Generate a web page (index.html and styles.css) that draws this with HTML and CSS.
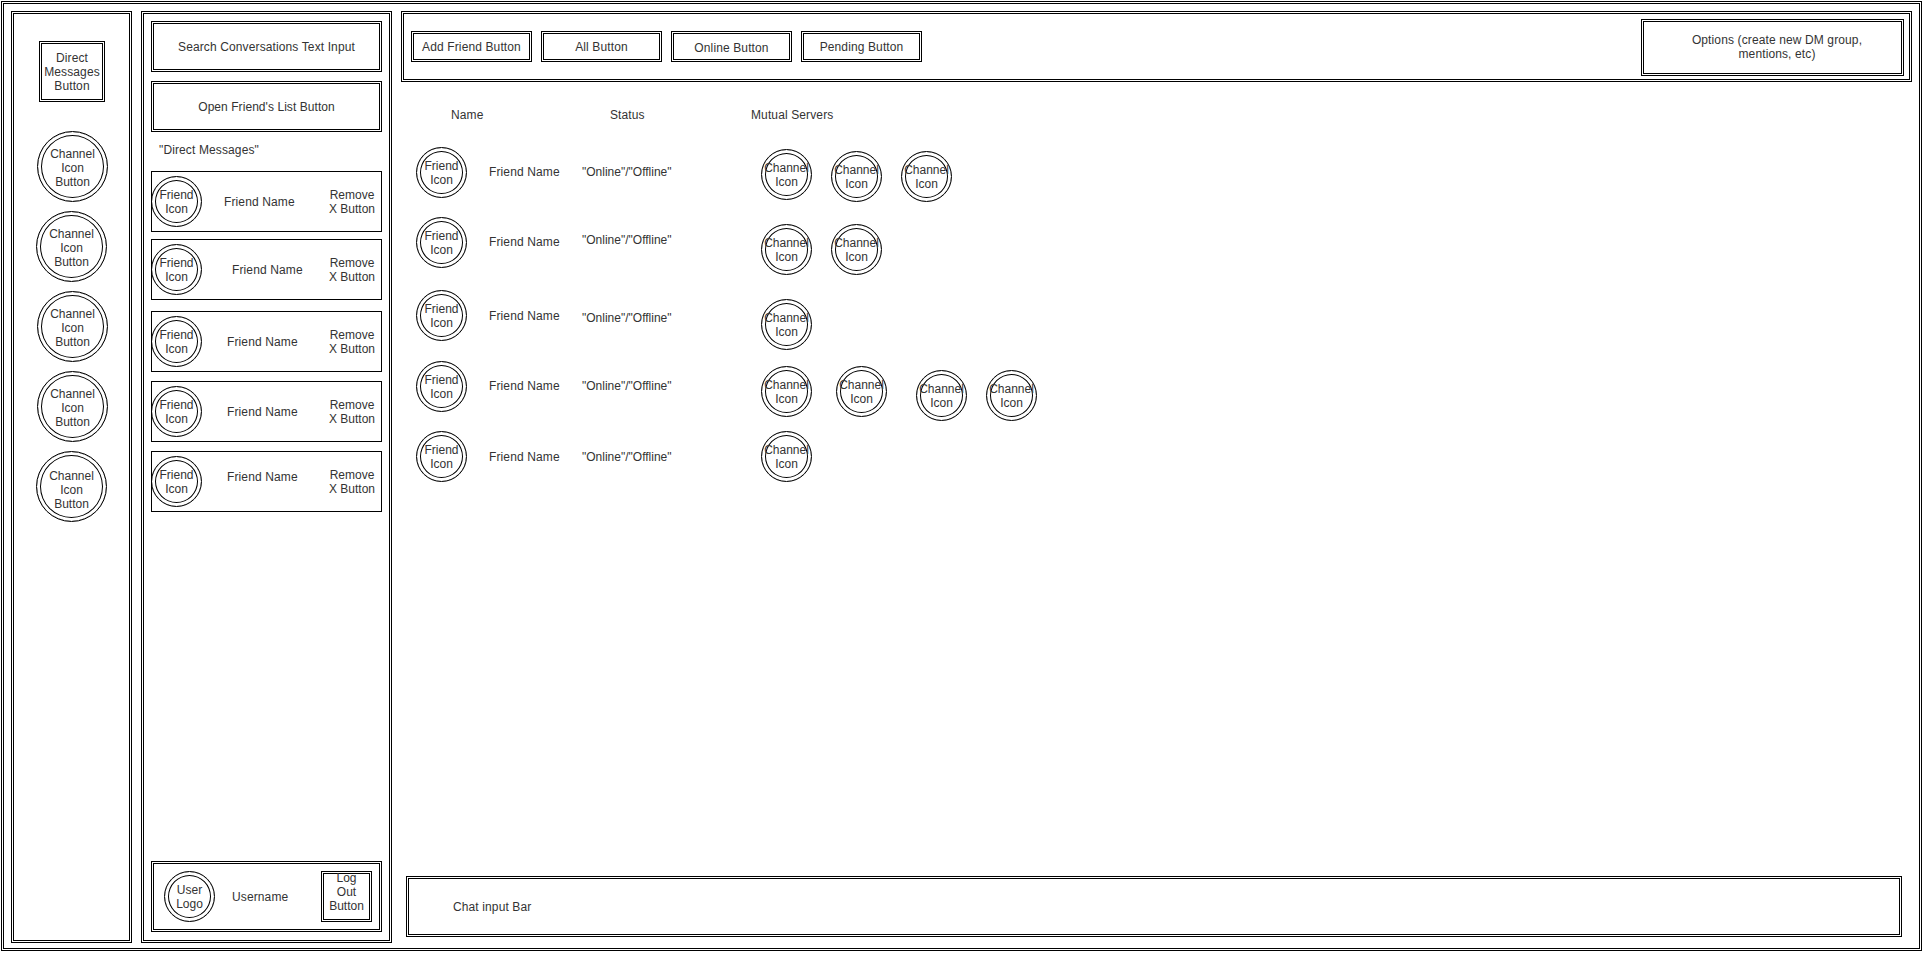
FILE: index.html

```html
<!DOCTYPE html>
<html lang="en">
<head>
  <meta charset="UTF-8">
  <title>Friends page wireframe</title>
  <link rel="stylesheet" href="styles.css">
</head>
<body>
  <div class="frame">

    <!-- channels column -->
    <div class="sidebar">
      <div class="box dm-button">Direct<br>Messages<br>Button</div>
      <div class="circle big">Channel<br>Icon<br>Button</div>
      <div class="circle big shift">Channel<br>Icon<br>Button</div>
      <div class="circle big">Channel<br>Icon<br>Button</div>
      <div class="circle big">Channel<br>Icon<br>Button</div>
      <div class="circle big shift low">Channel<br>Icon<br>Button</div>
    </div>

    <!-- conversations column -->
    <div class="panel">
      <div class="box wide">Search Conversations Text Input</div>
      <div class="box wide open-list">Open Friend's List Button</div>
      <div class="dm-label">"Direct Messages"</div>

      <div class="dm-row first">
        <div class="circle">Friend<br>Icon</div>
        <div class="dm-name n1">Friend Name</div>
        <div class="remove">Remove<br>X Button</div>
      </div>
      <div class="dm-row r2">
        <div class="circle">Friend<br>Icon</div>
        <div class="dm-name n2">Friend Name</div>
        <div class="remove">Remove<br>X Button</div>
      </div>
      <div class="dm-row r3">
        <div class="circle">Friend<br>Icon</div>
        <div class="dm-name">Friend Name</div>
        <div class="remove">Remove<br>X Button</div>
      </div>
      <div class="dm-row">
        <div class="circle">Friend<br>Icon</div>
        <div class="dm-name">Friend Name</div>
        <div class="remove">Remove<br>X Button</div>
      </div>
      <div class="dm-row">
        <div class="circle">Friend<br>Icon</div>
        <div class="dm-name n5">Friend Name</div>
        <div class="remove">Remove<br>X Button</div>
      </div>

      <div class="box user-bar">
        <div class="circle">User<br>Logo</div>
        <div class="username">Username</div>
        <div class="box logout">Log<br>Out<br>Button</div>
      </div>
    </div>

    <!-- friends list -->
    <div class="main">
      <div class="box topbar">
        <div class="box tab">Add Friend Button</div>
        <div class="box tab">All Button</div>
        <div class="box tab online-tab">Online Button</div>
        <div class="box tab">Pending Button</div>
        <div class="box options">Options (create new DM group,<br>mentions, etc)</div>
      </div>

      <div class="columns">
        <div class="col-name">Name</div>
        <div class="col-status">Status</div>
        <div>Mutual Servers</div>
      </div>

      <div class="friend">
        <div class="circle">Friend<br>Icon</div>
        <div class="name">Friend Name</div>
        <div class="status">"Online"/"Offline"</div>
        <div class="servers">
          <div class="circle y2">Channel<br>Icon</div>
          <div class="circle y4 g19">Channel<br>Icon</div>
          <div class="circle y4 g19">Channel<br>Icon</div>
        </div>
      </div>
      <div class="friend f2">
        <div class="circle">Friend<br>Icon</div>
        <div class="name">Friend Name</div>
        <div class="status s-up2">"Online"/"Offline"</div>
        <div class="servers">
          <div class="circle y7">Channel<br>Icon</div>
          <div class="circle y7 g19">Channel<br>Icon</div>
        </div>
      </div>
      <div class="friend f3">
        <div class="circle">Friend<br>Icon</div>
        <div class="name s-down1">Friend Name</div>
        <div class="status s-down3">"Online"/"Offline"</div>
        <div class="servers">
          <div class="circle y9">Channel<br>Icon</div>
        </div>
      </div>
      <div class="friend f4">
        <div class="circle">Friend<br>Icon</div>
        <div class="name">Friend Name</div>
        <div class="status">"Online"/"Offline"</div>
        <div class="servers">
          <div class="circle y5">Channel<br>Icon</div>
          <div class="circle y5 g24">Channel<br>Icon</div>
          <div class="circle y9 g29">Channel<br>Icon</div>
          <div class="circle y9 g19">Channel<br>Icon</div>
        </div>
      </div>
      <div class="friend f5">
        <div class="circle">Friend<br>Icon</div>
        <div class="name s-down1">Friend Name</div>
        <div class="status s-down1">"Online"/"Offline"</div>
        <div class="servers">
          <div class="circle">Channel<br>Icon</div>
        </div>
      </div>

      <div class="box chat-bar">Chat input Bar</div>
    </div>

  </div>
</body>
</html>
```

FILE: styles.css

```css
* {
    box-sizing: border-box;
}

body {
    margin: 1px 0 0 1px;
    font-family: "Liberation Sans", Arial, sans-serif;
    font-size: 12px;
    line-height: 14px;
    letter-spacing: 0.12px;
    color: #333;
    background-color: #fff;
}

.frame {
    display: flex;
    width: 1921px;
    height: 950px;
    padding: 7px 0 5px 7px;
    border: 3px double #000;
}

/* shared shapes */
.box {
    display: flex;
    align-items: center;
    justify-content: center;
    flex: none;
    text-align: center;
    border: 3px double #000;
}

.circle {
    display: flex;
    align-items: center;
    justify-content: center;
    flex: none;
    width: 51px;
    height: 51px;
    text-align: center;
    white-space: nowrap;
    letter-spacing: 0;
    border: 1px solid #000;
    border-radius: 50%;
    box-shadow: inset 0 0 0 3px #fff, inset 0 0 0 4px #000;
}

/* channels column */
.sidebar {
    display: flex;
    flex-direction: column;
    flex: none;
    width: 121px;
    height: 932px;
    border: 3px double #000;
}

.dm-button {
    width: 66px;
    height: 61px;
    margin: 27px 0 29px 25px;
}

.circle.big {
    width: 71px;
    height: 71px;
    margin: 0 0 9px 23px;
    padding-top: 2px;
}

.circle.big.shift {
    margin-left: 22px;
}

.circle.big.low {
    padding-top: 6px;
}

/* conversations column */
.panel {
    display: flex;
    flex-direction: column;
    flex: none;
    width: 251px;
    height: 932px;
    margin-left: 9px;
    padding: 7px 7px 8px 7px;
    border: 3px double #000;
}

.wide {
    width: 231px;
    height: 51px;
}

.open-list {
    margin-top: 9px;
    letter-spacing: 0.06px;
}

.dm-label {
    margin: 11px 0 14px 8px;
}

.dm-row {
    display: flex;
    align-items: center;
    flex: none;
    width: 231px;
    height: 61px;
    margin-top: 9px;
    border: 1px solid #000;
}

.dm-row.first {
    margin-top: 0;
}

.dm-row.r2 {
    margin-top: 7px;
}

.dm-row.r3 {
    margin-top: 11px;
}

.dm-row .circle {
    margin-left: -1px;
}

.dm-name {
    margin-left: 25px;
}

.dm-name.n1 {
    margin-left: 22px;
}

.dm-name.n2 {
    margin-left: 30px;
}

.dm-name.n5 {
    margin-bottom: 9px;
}

.remove {
    margin-left: auto;
    margin-right: 6px;
    text-align: center;
    letter-spacing: 0;
}

.user-bar {
    justify-content: flex-start;
    width: 231px;
    height: 71px;
    margin-top: auto;
}

.user-bar .circle {
    margin-left: 10px;
}

.username {
    margin-left: 17px;
}

.logout {
    width: 51px;
    height: 51px;
    margin-left: auto;
    margin-right: 7px;
    padding-bottom: 10px;
    letter-spacing: 0;
}

/* friends list */
.main {
    display: flex;
    flex-direction: column;
    flex: none;
    width: 1511px;
    height: 932px;
    margin-left: 9px;
}

.topbar {
    justify-content: flex-start;
    gap: 9px;
    width: 1511px;
    height: 71px;
    padding-left: 7px;
}

.tab {
    width: 121px;
    height: 31px;
}

.online-tab {
    padding-top: 2px;
}

.options {
    align-self: flex-start;
    width: 263px;
    height: 57px;
    margin-top: 5px;
    margin-left: auto;
    margin-right: 5px;
    padding: 0 0 1px 9px;
}

.columns {
    display: flex;
    margin-top: 26px;
    padding-left: 50px;
}

.col-name {
    width: 159px;
}

.col-status {
    width: 141px;
}

.friend {
    display: flex;
    flex: none;
    height: 51px;
    margin-top: 25px;
    padding-left: 15px;
}

.f2 {
    margin-top: 19px;
}

.f3 {
    margin-top: 22px;
}

.f4 {
    margin-top: 20px;
}

.f5 {
    margin-top: 19px;
}

.name {
    width: 93px;
    margin-left: 22px;
    line-height: 51px;
}

.status {
    width: 179px;
    line-height: 51px;
    letter-spacing: 0;
}

.servers {
    display: flex;
}

/* the hand placed rows are not quite aligned */
.s-up2 { margin-top: -2px; }
.s-down1 { margin-top: 1px; }
.s-down3 { margin-top: 3px; }
.y2 { margin-top: 2px; }
.y4 { margin-top: 4px; }
.y5 { margin-top: 5px; }
.y7 { margin-top: 7px; }
.y9 { margin-top: 9px; }
.g19 { margin-left: 19px; }
.g24 { margin-left: 24px; }
.g29 { margin-left: 29px; }

.chat-bar {
    justify-content: flex-start;
    width: 1496px;
    height: 61px;
    margin-top: auto;
    margin-bottom: 6px;
    margin-left: 5px;
    padding-left: 44px;
}
```
